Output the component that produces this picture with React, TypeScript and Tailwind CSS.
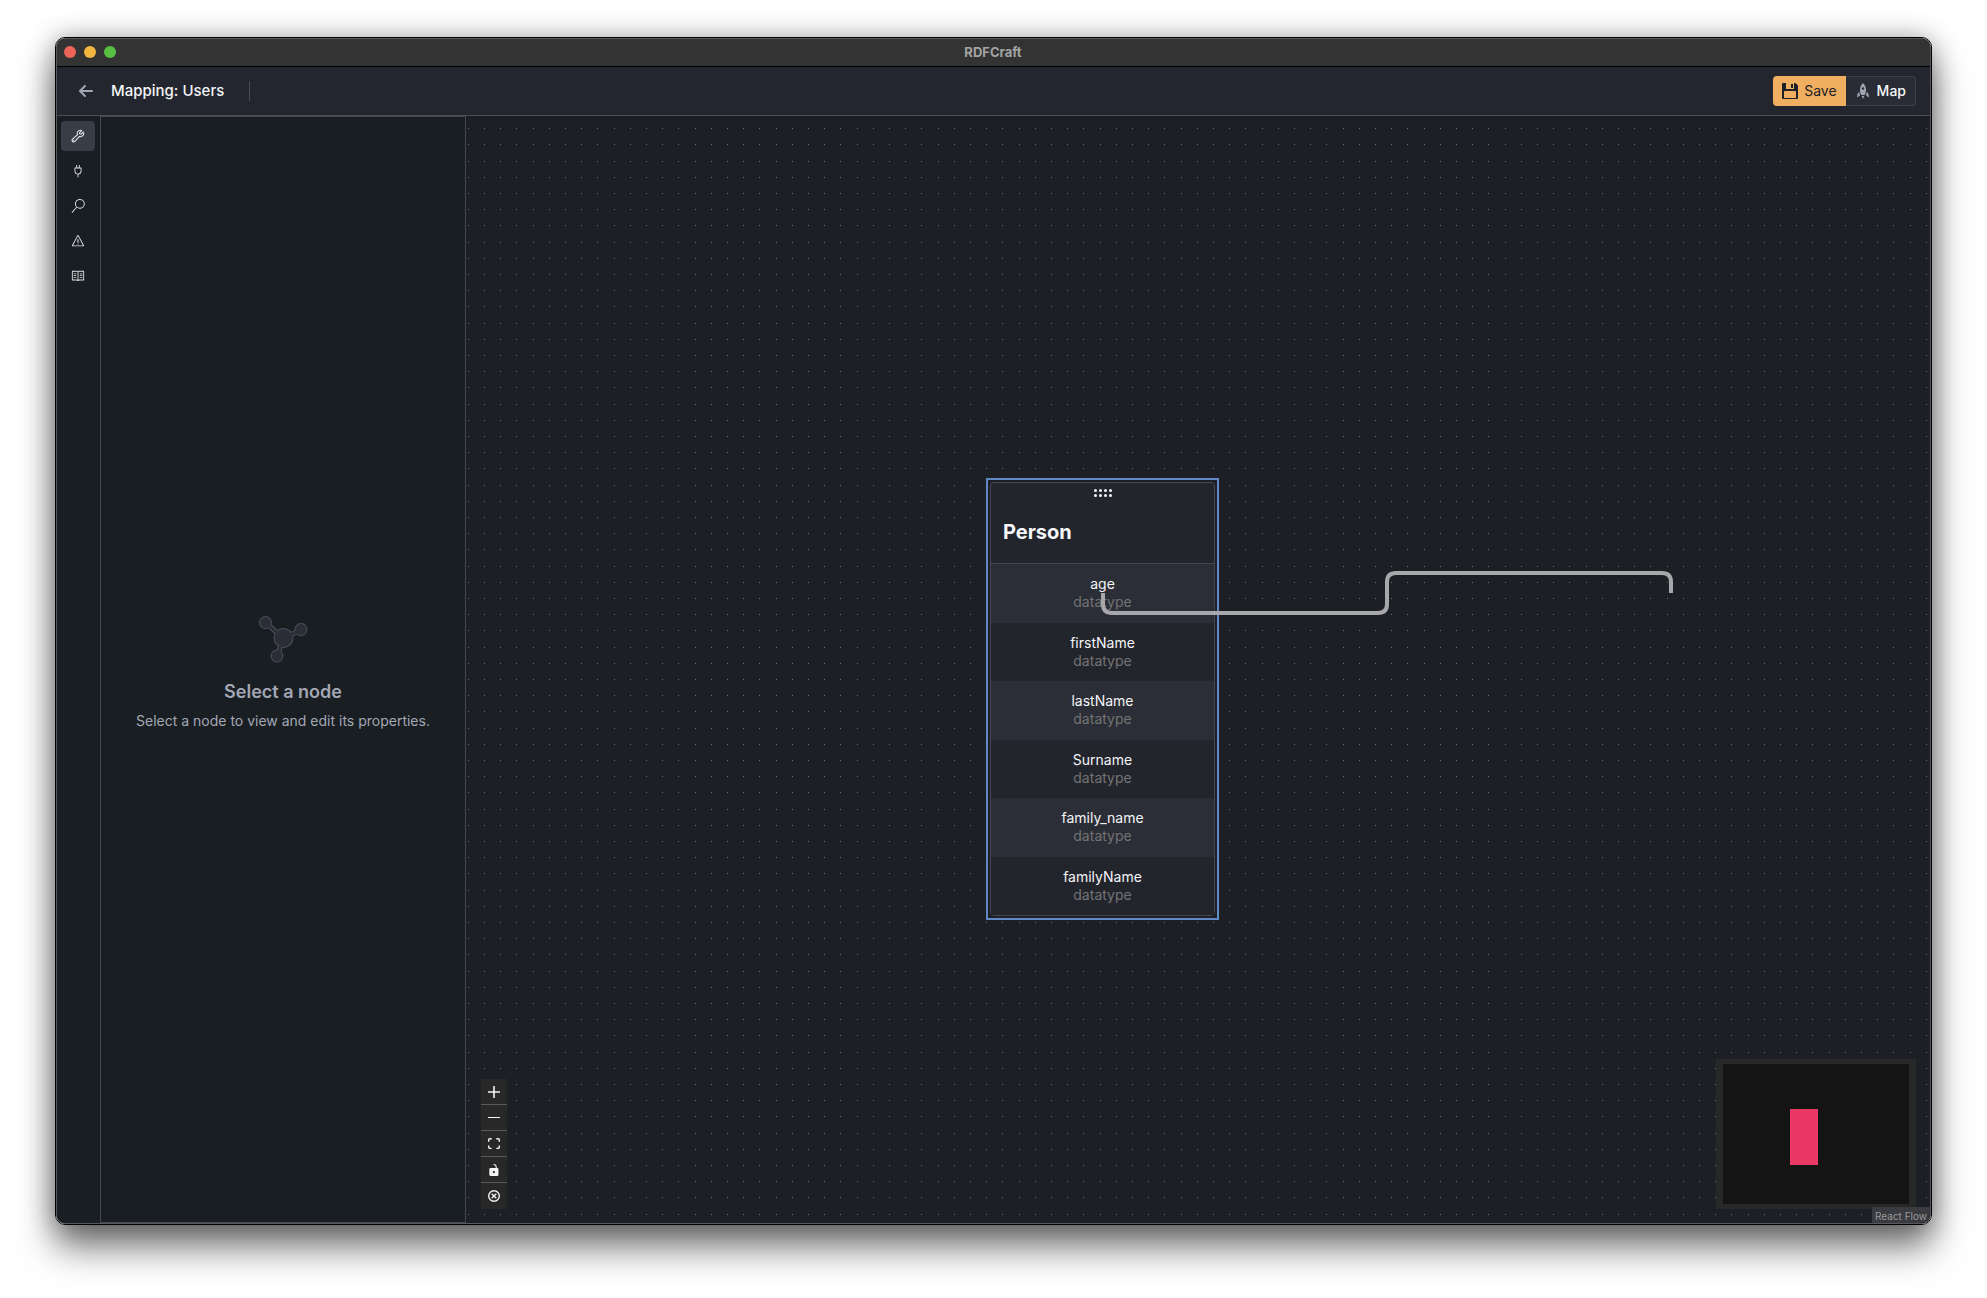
import React from 'react';
import { VscBook, VscPlug, VscSearch, VscWarning } from 'react-icons/vsc';

const properties = ['age', 'firstName', 'lastName', 'Surname', 'family_name', 'familyName'];

function WrenchIcon() {
  return (
    <svg viewBox="0 0 16 16" className="size-[14px]" fill="none" stroke="currentColor" strokeWidth="1.2" strokeLinejoin="round" aria-hidden="true">
      <path d="M13.9 3.6 11.6 5.9 10 5.6 9.8 4.1 12.2 1.8C10.5 1.1 8.6 1.6 7.7 3.1 7.1 4.1 7.1 5.3 7.5 6.3L1.8 11.6C1 12.4 1 13.5 1.7 14.3 2.5 15 3.7 15 4.5 14.2L9.6 8.5C10.9 9 12.5 8.7 13.5 7.7 14.6 6.6 14.8 5 13.9 3.6Z" />
      <path d="M3 12.9h.1" strokeLinecap="round" strokeWidth="1.4" />
    </svg>
  );
}

const tools = [
  { label: 'Properties', icon: <WrenchIcon /> },
  { label: 'Connections', icon: <VscPlug className="size-[14px]" /> },
  { label: 'Search', icon: <VscSearch className="size-[14px]" /> },
  { label: 'Problems', icon: <VscWarning className="size-[14px]" /> },
  { label: 'References', icon: <VscBook className="size-[14px]" /> },
];

function TitleBar() {
  return (
    <div className="grid h-[28px] shrink-0 grid-cols-3 items-center border-b border-black bg-[#333333] pb-[2px] pl-[7px] pr-2">
      <div className="flex gap-2">
        <button aria-label="Close" className="size-3 rounded-full bg-[#ec6558]" />
        <button aria-label="Minimize" className="size-3 rounded-full bg-[#f3b73f]" />
        <button aria-label="Zoom" className="size-3 rounded-full bg-[#57c043]" />
      </div>
      <div className="text-center text-[13px] font-bold leading-4 text-[#a3a3a3]">RDFCraft</div>
    </div>
  );
}

function Header() {
  return (
    <header className="flex h-[49px] shrink-0 items-center border-b border-[#4b4d53] bg-[#23262e] pl-[21px] pr-[14px]">
      <button aria-label="Back" className="text-[#a0a5b4]">
        <svg viewBox="0 0 16 16" className="size-4" fill="currentColor" aria-hidden="true">
          <path d="M13.99 6.99H4.41L7.7 3.7a1.003 1.003 0 00-1.42-1.42l-5 5a1.014 1.014 0 000 1.42l5 5a1.003 1.003 0 001.42-1.41L4.41 8.99H14c.55 0 1-.45 1-1s-.46-1-1.01-1z" />
        </svg>
      </button>
      <h1 className="ml-[17px] text-[15px] font-medium leading-5 text-[#f3f4f6]">Mapping: Users</h1>
      <div className="ml-[25px] h-5 w-px bg-[#4b4d54]" />
      <div className="ml-auto flex">
        <button className="flex h-[30px] items-center gap-[6px] rounded-l-sm bg-[#f0ae61] px-[9px] text-[14px] leading-5 text-[#1e2127]">
          <svg viewBox="0 0 16 16" className="size-4" fill="currentColor" aria-hidden="true">
            <path d="M15.71 2.29l-2-2A.997.997 0 0013 0h-1v6H4V0H1C.45 0 0 .45 0 1v14c0 .55.45 1 1 1h14c.55 0 1-.45 1-1V3c0-.28-.11-.53-.29-.71zM14 15H2V9c0-.55.45-1 1-1h10c.55 0 1 .45 1 1v6zM11 1H9v4h2V1z" />
          </svg>
          Save
        </button>
        <button className="flex h-[30px] items-center gap-[6px] rounded-r-sm border border-l-0 border-[#3e4149] bg-[#292c34] px-[9px] text-[14px] font-medium leading-5 text-[#f6f7f9]">
          <svg viewBox="0 0 16 16" className="size-4 text-[#a0a5b4]" fill="currentColor" aria-hidden="true">
            <path fillRule="evenodd" d="M8 0C6.2 1.7 5 4 5 6.5c0 2 .4 4 1.1 5.5h3.8C10.6 10.5 11 8.5 11 6.5 11 4 9.8 1.7 8 0Zm0 4.2a1.3 1.3 0 1 1 0 2.6 1.3 1.3 0 0 1 0-2.6Z" />
            <path d="M4.3 8.5 2.5 11 2 14.5l2.9-2.1C4.5 11.2 4.3 9.9 4.3 8.5ZM11.7 8.5 13.5 11l.5 3.5-2.9-2.1c.4-1.2.6-2.5.6-3.9ZM6.7 13h2.6L8 16Z" />
          </svg>
          Map
        </button>
      </div>
    </header>
  );
}

function ToolRail() {
  return (
    <nav className="flex w-[43px] shrink-0 flex-col gap-[5px] bg-[#191e22] px-1 pt-[5px]">
      {tools.map((tool, i) => (
        <button
          key={tool.label}
          aria-label={tool.label}
          className={
            i === 0
              ? 'flex h-[30px] w-[34px] items-center justify-center rounded-sm bg-[#383e47] text-[#e4e6e9]'
              : 'flex h-[30px] w-[34px] items-center justify-center rounded-sm text-[#e4e6e9]'
          }
        >
          {tool.icon}
        </button>
      ))}
    </nav>
  );
}

function GraphShape() {
  return (
    <>
      <path d="M7.5 7.5 25 23 43.5 15M25 23 19.5 41" fill="none" />
      <circle cx="7.5" cy="7.5" r="4" />
      <circle cx="43" cy="14.500" r="4" />
      <circle cx="25.500" cy="23" r="7.500" />
      <circle cx="19" cy="41" r="4" />
    </>
  );
}

function EmptyPanel() {
  return (
    <aside className="flex w-[366px] shrink-0 flex-col items-center justify-center border border-[#47494e] bg-[#191e22] pt-[5px] text-[#a3a7b5]">
      <svg viewBox="0 0 50 48" className="h-[48px] w-[50px]" aria-hidden="true">
        <g fill="#4c505b" stroke="#4c505b" strokeWidth="5">
          <GraphShape />
        </g>
        <g fill="#2b2e36" stroke="#2b2e36" strokeWidth="3">
          <GraphShape />
        </g>
      </svg>
      <h2 className="mt-[18px] text-[18px] font-semibold leading-[22px]">Select a node</h2>
      <p className="mt-[9px] text-[14px] leading-[18px]">Select a node to view and edit its properties.</p>
    </aside>
  );
}

function PersonNode() {
  return (
    <section className="absolute left-[520px] top-[362px] flex h-[442px] w-[233px] flex-col border-2 border-[#6188c6] bg-[#1c1f24] p-[2px]">
      <div className="flex flex-1 flex-col rounded-sm border border-[#46484e] bg-[#23252d]">
        <div className="flex h-[81px] shrink-0 flex-col border-b border-[#46484e]">
          <svg viewBox="0 0 20 10" className="mx-auto mt-[5px] h-[10px] w-5" fill="#f3f4f6" aria-hidden="true">
            {[2, 7, 12, 17].map((x) => (
              <g key={x}>
                <circle cx={x + 0.5} cy="2.500" r="1.500" />
                <circle cx={x + 0.5} cy="7.500" r="1.500" />
              </g>
            ))}
          </svg>
          <h2 className="mt-[21px] px-3 text-[20px] font-bold leading-[26px] text-[#f6f7f9]">Person</h2>
        </div>
        {properties.map((name) => (
          <div key={name} className="flex flex-1 flex-col items-center justify-center text-[14px] leading-[18px] odd:bg-[#23252d] even:bg-[#2b2e36]">
            <span className="text-[#f3f4f6]">{name}</span>
            <span className="text-[#737373]">datatype</span>
          </div>
        ))}
      </div>
    </section>
  );
}

const controls = [
  {
    label: 'Zoom in',
    box: '0 0 32 32',
    d: 'M32 18.133H18.133V32h-4.266V18.133H0v-4.266h13.867V0h4.266v13.867H32z',
  },
  { label: 'Zoom out', box: '0 0 32 5', d: 'M0 0h32v4.2H0z' },
  {
    label: 'Fit view',
    box: '0 0 32 30',
    d: 'M3.692 4.63c0-.53.4-.938.939-.938h5.215V0H4.708C2.13 0 0 2.054 0 4.63v5.216h3.692V4.631zM27.354 0h-5.2v3.692h5.17c.53 0 .984.4.984.939v5.215H32V4.631A4.624 4.624 0 0027.354 0zm.954 24.83c0 .532-.4.94-.939.94h-5.215v3.768h5.215c2.577 0 4.631-2.13 4.631-4.707v-5.139h-3.692v5.139zm-23.677.94a.919.919 0 01-.939-.94v-5.138H0v5.139c0 2.577 2.13 4.707 4.708 4.707h5.138V25.77H4.631z',
  },
  {
    label: 'Lock',
    box: '0 0 25 32',
    d: 'M21.333 10.667H19.81V7.619C19.81 3.429 16.38 0 12.19 0c-4.114 1.828-1.37 2.133.305 2.438 1.676.305 4.42 2.59 4.42 5.181v3.048H3.047A3.056 3.056 0 000 13.714v15.238A3.056 3.056 0 003.048 32h18.285a3.056 3.056 0 003.048-3.048V13.714a3.056 3.056 0 00-3.048-3.047zM12.19 24.533a3.056 3.056 0 01-3.047-3.047 3.056 3.056 0 013.047-3.048 3.056 3.056 0 013.048 3.048 3.056 3.056 0 01-3.048 3.047z',
  },
];

function Controls() {
  return (
    <div className="absolute bottom-[14px] left-[15px] flex w-[26px] flex-col bg-[#282828]">
      {controls.map((c) => (
        <button key={c.label} aria-label={c.label} className="flex h-[26px] items-center justify-center border-b border-[#5a5a5a] text-[#f4f4f4]">
          <svg viewBox={c.box} className="max-h-3 w-3" fill="currentColor" aria-hidden="true">
            <path d={c.d} />
          </svg>
        </button>
      ))}
      <button aria-label="Clear" className="flex h-[26px] items-center justify-center text-[#f4f4f4]">
        <svg viewBox="0 0 12 12" className="size-3" fill="none" stroke="currentColor" strokeWidth="1.4" aria-hidden="true">
          <circle cx="6" cy="6" r="5.300" />
          <path d="M3.7 3.7 8.3 8.3M8.3 3.7 3.7 8.3" />
        </svg>
      </button>
    </div>
  );
}

function Canvas() {
  return (
    <main className="relative min-w-0 flex-1 overflow-hidden bg-[#1c1f24]">
      <svg className="absolute inset-0 h-full w-full" aria-hidden="true">
        <defs>
          <pattern id="dots" x="67" y="45" width="81" height="81" patternUnits="userSpaceOnUse">
            {[0, 16, 32, 48, 64].map((y) => (
              <path key={y} d={`M0 ${y}h1v1h-1zM16 ${y}h1v1h-1zM32 ${y}h1v1h-1zM48 ${y}h1v1h-1zM64 ${y}h1v1h-1z`} fill="#6c6f74" />
            ))}
          </pattern>
        </defs>
        <rect width="100%" height="100%" fill="url(#dots)" />
      </svg>
      <PersonNode />
      <svg className="pointer-events-none absolute inset-0 h-full w-full" aria-hidden="true">
        <path
          d="M637 477V488Q637 497 646 497H912Q921 497 921 488V466Q921 457 930 457H1196Q1205 457 1205 466V477"
          fill="none"
          stroke="#a8a8ac"
          strokeWidth="4"
        />
      </svg>
      <Controls />
      <div className="absolute bottom-[14px] right-[14px] h-[150px] w-[200px] bg-[#282828] px-[7px] py-[5px]">
        <svg viewBox="0 0 186 140" className="h-full w-full bg-[#141414]" role="img" aria-label="Mini map">
          <rect x="67" y="45" width="28" height="56" fill="#e93766" />
        </svg>
      </div>
      <a href="#react-flow" className="absolute bottom-0 right-0 bg-[#393b40] px-[3px] pb-px pt-[3px] text-[10px] leading-3 text-[#999999]">
        React Flow
      </a>
    </main>
  );
}

export default function App() {
  return (
    <div className="flex h-screen bg-white px-[55px] pb-[73px] pt-[37px] font-['Inter',sans-serif]">
      <div className="flex min-w-0 flex-1 rounded-[10px] border border-black shadow-[0_22px_36px_rgba(0,0,0,0.55),0_0_26px_rgba(0,0,0,0.3)]">
        <div className="flex min-w-0 flex-1 flex-col overflow-hidden rounded-[9px] border border-[#57595c] bg-[#191e22]">
          <TitleBar />
          <Header />
          <div className="flex min-h-0 flex-1">
            <ToolRail />
            <EmptyPanel />
            <Canvas />
          </div>
        </div>
      </div>
    </div>
  );
}
